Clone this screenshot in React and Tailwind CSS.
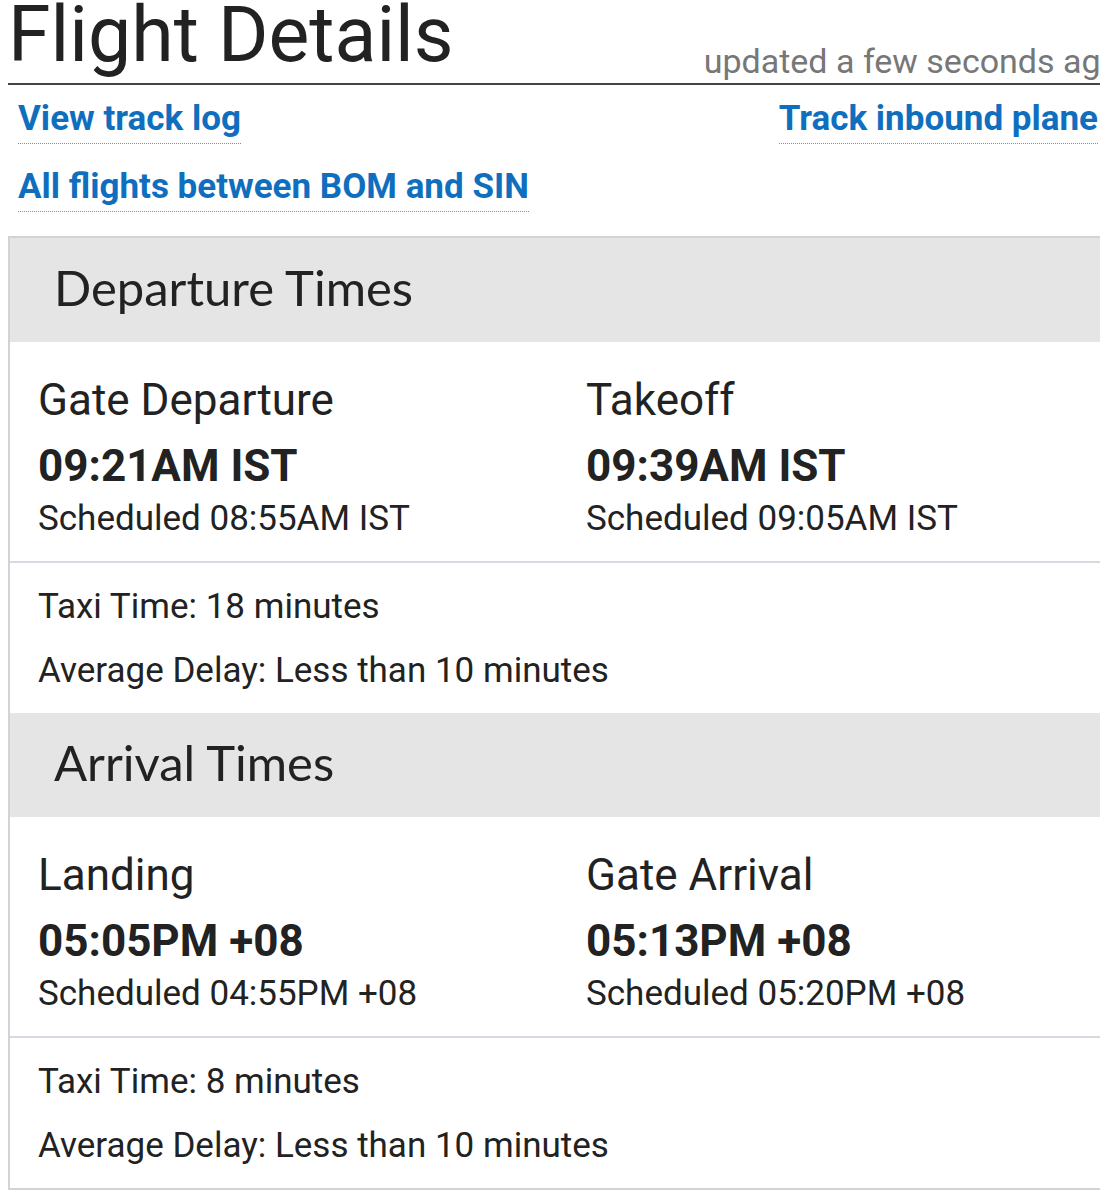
const times = [
  {
    title: "Departure Times",
    cols: [
      { label: "Gate Departure", actual: "09:21AM IST", scheduled: "Scheduled 08:55AM IST" },
      { label: "Takeoff", actual: "09:39AM IST", scheduled: "Scheduled 09:05AM IST" },
    ],
    taxi: "Taxi Time: 18 minutes",
    delay: "Average Delay: Less than 10 minutes",
  },
  {
    title: "Arrival Times",
    cols: [
      { label: "Landing", actual: "05:05PM +08", scheduled: "Scheduled 04:55PM +08" },
      { label: "Gate Arrival", actual: "05:13PM +08", scheduled: "Scheduled 05:20PM +08" },
    ],
    taxi: "Taxi Time: 8 minutes",
    delay: "Average Delay: Less than 10 minutes",
  },
];

function TimeColumn({ col, first }) {
  return (
    <div className={first ? "w-[576px] pl-[28px]" : "flex-1"}>
      <div className="text-[44px] leading-[48px]">{col.label}</div>
      <div className="mt-[16px] text-[44px] leading-[52px] font-bold">{col.actual}</div>
      <div className="mt-[7px] text-[35px] leading-[40px]">{col.scheduled}</div>
    </div>
  );
}

function Section({ data }) {
  return (
    <div>
      {/* section header */}
      <div className="h-[104px] bg-[#e5e5e5] flex items-center pl-[44px] pb-[6px]">
        <h2 className="font-['Lato',sans-serif] text-[49px] leading-[58px] text-[#222]">
          {data.title}
        </h2>
      </div>

      {/* scheduled vs actual */}
      <div className="flex pt-[34px] h-[219px]">
        <TimeColumn col={data.cols[0]} first />
        <TimeColumn col={data.cols[1]} />
      </div>

      <div className="h-[2px] bg-[#d4dae0]" />

      {/* taxi / delay */}
      <div className="h-[150px] pl-[28px] pt-[24px]">
        <div className="text-[35px] leading-[40px]">{data.taxi}</div>
        <div className="mt-[24px] text-[35px] leading-[40px]">{data.delay}</div>
      </div>
    </div>
  );
}

export default function App() {
  return (
    <div className="w-[1100px] overflow-hidden bg-white">
      <div className="w-[1120px] pl-2 font-['Roboto',sans-serif] text-[#222]">
        {/* Title bar */}
        <div className="flex justify-between items-end border-b-2 border-[#444]">
          <h1 className="-mt-[3px] pb-[9px] text-[77px] leading-none text-[#222] whitespace-nowrap">
            Flight Details
          </h1>
          <div className="pb-[3px] text-[34px] leading-[38px] text-[#777] whitespace-nowrap">
            updated a few seconds ago
          </div>
        </div>

        {/* Links */}
        <div className="pl-[10px] pr-[22px] font-bold text-[35px] leading-[40px] text-[#0f6fbe]">
          <div className="flex justify-between mt-[14px]">
            <a href="#" className="inline-block pb-[4px] border-b border-dotted border-[#5a9ad6]">
              View track log
            </a>
            <a href="#" className="inline-block pb-[4px] border-b border-dotted border-[#5a9ad6]">
              Track inbound plane
            </a>
          </div>
          <div className="mt-[23px]">
            <a href="#" className="inline-block pb-[4px] border-b border-dotted border-[#5a9ad6]">
              All flights between BOM and SIN
            </a>
          </div>
        </div>

        {/* Times card */}
        <div className="mt-[24px] border-2 border-[#d0d4d8] mb-[12px]">
          {times.map((t) => (
            <Section key={t.title} data={t} />
          ))}
        </div>
      </div>
    </div>
  );
}
